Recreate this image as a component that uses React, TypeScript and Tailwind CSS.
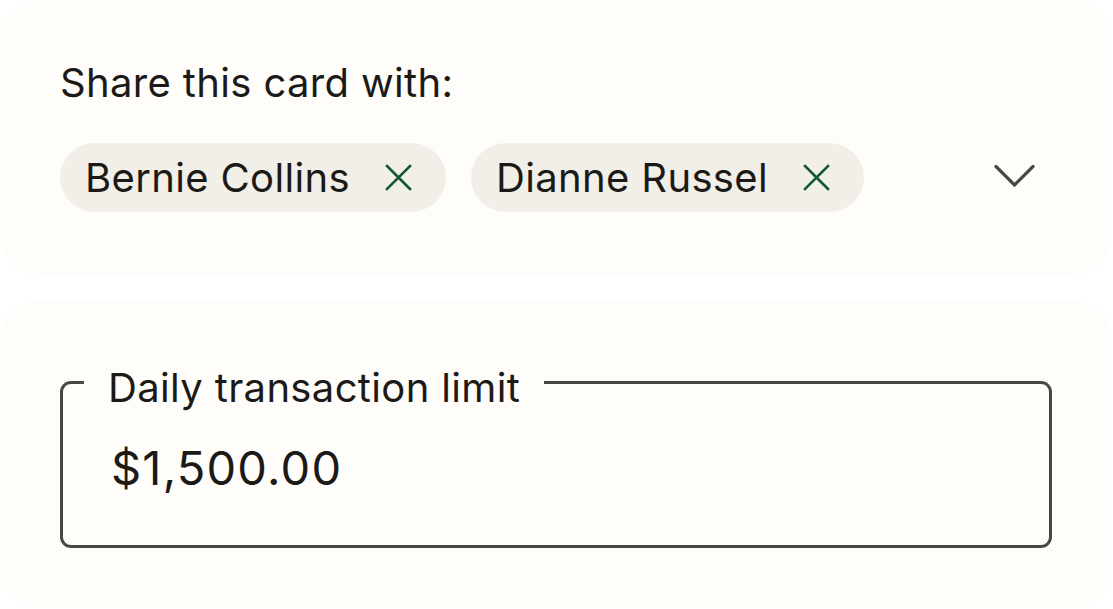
import { useState } from "react";

const people = ["Bernie Collins", "Dianne Russel"];

function CloseIcon() {
  return (
    <svg width="27" height="27" viewBox="0 0 27 27" fill="none" stroke="#11582f" strokeWidth="2.6" strokeLinecap="square">
      <path d="M2 2 L25 25 M25 2 L2 25" />
    </svg>
  );
}

function Chevron() {
  return (
    <svg width="41" height="25" viewBox="0 0 41 25" fill="none" stroke="#4a4843" strokeWidth="3.2" strokeLinecap="round" strokeLinejoin="miter">
      <path d="M2 2.5 L20.5 21 L39 2.5" />
    </svg>
  );
}

export default function App() {
  const [shared, setShared] = useState(people);

  return (
    <div className="min-h-screen bg-white font-['Inter',_sans-serif] text-[#1c1a17]">
      {/* share card */}
      <div className="w-[1112px] rounded-[40px] bg-[#fefdf9] px-[60px] pt-[59px] pb-[63px]">
        <p className="text-[40px] leading-[48px] tracking-[0.35px]">Share this card with:</p>
        <div className="mt-[36px] flex items-center justify-between">
          <div className="flex gap-[25px]">
            {shared.map((name) => (
              <div
                key={name}
                className="flex h-[69px] items-center rounded-full bg-[#f1efe8] pl-[25px] pr-[34px]"
              >
                <span className="text-[40px] leading-[48px] tracking-[0.35px]">{name}</span>
                <button
                  className="ml-[35px] flex items-center"
                  onClick={() => setShared(shared.filter((n) => n !== name))}
                >
                  <CloseIcon />
                </button>
              </div>
            ))}
          </div>
          <div className="mr-[17px] mb-[3px] flex items-center">
            <Chevron />
          </div>
        </div>
      </div>

      {/* limit card */}
      <div className="mt-[25px] h-[308px] w-[1112px] rounded-[40px] bg-[#fefdf9] px-[60px] pt-[54px]">
        <fieldset className="h-[194px] rounded-[11px] border-[3px] border-[#4a4843] pl-[48px]">
          <legend className="-ml-[27px] px-[24px] pt-[12px] text-[40px] leading-[44px] tracking-[0.35px]">
            Daily transaction limit
          </legend>
          <div className="mt-[30px] text-[47px] leading-[56px] tracking-[1.2px]">$1,500.00</div>
        </fieldset>
      </div>
    </div>
  );
}
